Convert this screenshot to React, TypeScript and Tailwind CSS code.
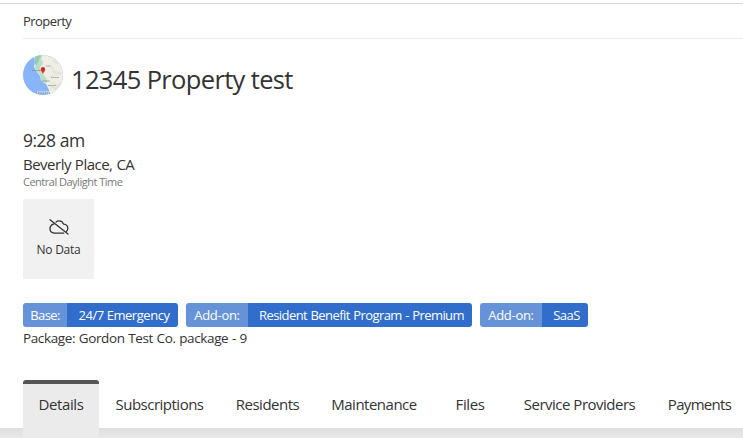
import React from "react";

const tabs = [
  { label: "Details", box: "w-[76px]", text: "tracking-[-0.4px]" },
  { label: "Subscriptions", box: "w-[121px]", text: "tracking-[-0.5px]" },
  { label: "Residents", box: "w-[95px]", text: "tracking-[-0.5px]" },
  { label: "Maintenance", box: "w-[118px]", text: "tracking-[-0.5px]" },
  { label: "Files", box: "w-[74px]", text: "tracking-[-0.4px]" },
  { label: "Service Providers", box: "w-[145px]", text: "tracking-[-0.5px]" },
  { label: "Payments", box: "w-[95px]", text: "tracking-[-0.7px]" },
];

const badges = [
  { kind: "Base:", name: "24/7 Emergency", left: "w-11", right: "w-[111px]", kindText: "tracking-[-0.6px]", nameText: "tracking-[-0.45px]" },
  { kind: "Add-on:", name: "Resident Benefit Program - Premium", left: "w-[62px]", right: "w-[224px]", kindText: "tracking-[-0.3px]", nameText: "tracking-[-0.57px] [word-spacing:0.6px]" },
  { kind: "Add-on:", name: "SaaS", left: "w-[62px]", right: "w-[46px]", kindText: "tracking-[-0.3px]", nameText: "tracking-[-0.5px]" },
];

function MapAvatar() {
  return (
    <svg className="h-10 w-10 shrink-0" viewBox="0 0 40 40">
      <defs>
        <clipPath id="disc"><circle cx="20" cy="20" r="20" /></clipPath>
      </defs>
      <g clipPath="url(#disc)">
        <rect width="40" height="40" fill="#8ab4f8" />
        <path d="M11 0 L12 7 L11 12 L14 17 L17 21 L18 26 L23 29 L26 35 L27 40 H40 V0Z" fill="#f0eee4" />
        <path d="M11 0H20L18 4L20 8L17 12L19 17L22 22L25 27L22 28L18 25L17 20L12 14L13 7Z" fill="#b8dfc5" />
        <path d="M12 0H18L16 5L14 10L12 9Z" fill="#93cfad" />
        <path d="M25 1L33 2L31 6L35 9M29 12L31 17L37 18M26 30L33 34L39 27" fill="none" stroke="#dbe6d5" strokeWidth="2" />
        <path d="M20 5L19 18L28 28L38 31M25 22L39 18" fill="none" stroke="#e0ddd2" strokeWidth=".7" />
        <path d="M9 15.5h9M23 11h5M18 26h9M28 22.5h8M25 30.5h8" stroke="#75777a" strokeWidth="1.2" strokeDasharray="1.6 .5" opacity=".6" />
        <path d="M14 37.5h14" stroke="#fff" strokeWidth="2.5" opacity=".5" />
        <path d="M15 38h12" stroke="#777" strokeWidth="1" strokeDasharray="1.5 .7" />
        <path d="M20 19C19.5 17 17.8 16.4 17.8 14.3a2.2 2.2 0 1 1 4.4 0C22.2 16.4 20.5 17 20 19Z" fill="#e52e2b" />
        <circle cx="20" cy="14.3" r=".7" fill="#a91512" />
      </g>
    </svg>
  );
}

function CloudOff() {
  return (
    <svg className="h-[16px] w-[20px]" viewBox="0 0 20 16" fill="none" stroke="#333" strokeWidth="1.3" strokeLinecap="round" strokeLinejoin="round">
      <path d="M7 3.1C8 2.1 9.2 1.6 10.4 1.9c2 .2 3.4 1.4 4.1 3.2 2.5.2 4.3 1.9 4.3 4.2 0 1.3-.5 2.4-1.4 3.1" />
      <path d="M5 4.8C2.8 5.5 1 7.2 1 9.6c0 2.6 1.8 4.5 4.4 4.5h9.3" />
      <path d="M1 .8L19 15" />
    </svg>
  );
}

export default function App() {
  return (
    <div className="flex h-[438px] w-[743px] flex-col overflow-hidden whitespace-nowrap bg-white font-['Open_Sans',sans-serif] text-[#333]">
      <div className="mt-[3px] border-t border-[#d8d8d8]" />
      <header className="ml-[23px] flex h-[35px] items-center border-b border-[#ebebeb] pt-[2px] text-[13px]">
        <span className="tracking-[-0.55px]">Property</span>
      </header>

      <div className="ml-[23px] mt-4 flex h-[52px]">
        <MapAvatar />
        <h1 className="ml-2 mt-[6px] text-[25.5px] leading-9 tracking-[-0.65px]">12345 Property test</h1>
      </div>

      <section className="ml-[23px] mt-[22px] flex flex-col items-start">
        <div className="text-[17.5px] leading-6 tracking-[-0.5px]">9:28 am</div>
        <div className="text-[15px] leading-6 tracking-[-0.5px] [word-spacing:0.5px]">Beverly Place, CA</div>
        <div className="text-[11px] leading-3 tracking-[-0.5px] text-[#777]">Central Daylight Time</div>
        <div className="mt-[11px] flex h-20 w-[71px] flex-col items-center rounded-[1px] bg-[#f1f1f1] pt-[20px]">
          <CloudOff />
          <span className="mt-[5px] text-[12px] leading-5 tracking-[-0.25px]">No Data</span>
        </div>
      </section>

      <div className="ml-[23px] mt-6 flex gap-2 text-[13px] text-white">
        {badges.map((b) => (
          <div key={b.name} className="flex h-6 overflow-hidden rounded-[3px] leading-6">
            <span className={`${b.left} ${b.kindText} flex justify-center bg-[#6693d7]`}>{b.kind}</span>
            <span className={`${b.right} ${b.nameText} flex justify-center bg-[#316dca] pl-[3px]`}>{b.name}</span>
          </div>
        ))}
      </div>
      <div className="ml-[23px] mt-px text-[13.5px] leading-5 tracking-[-0.38px] [word-spacing:0.5px]">
        <span>Package: Gordon Test Co. package - 9</span>
      </div>

      <nav className="mt-8 flex h-[58px] shrink-0 bg-[linear-gradient(to_bottom,#fff_48px,#dedede_48px,#e9e9e9_58px)] pl-[23px] text-[15px]">
        {tabs.map((tab, i) => (
          <div key={tab.label} className={`${tab.box} ${tab.text} flex h-[58px] shrink-0 justify-center border-t-4 leading-[40px] ${i === 0 ? "rounded-t-[3px] border-[#555] bg-[#ebebeb]" : "border-transparent"}`}>
            <span>{tab.label}</span>
          </div>
        ))}
      </nav>
    </div>
  );
}
